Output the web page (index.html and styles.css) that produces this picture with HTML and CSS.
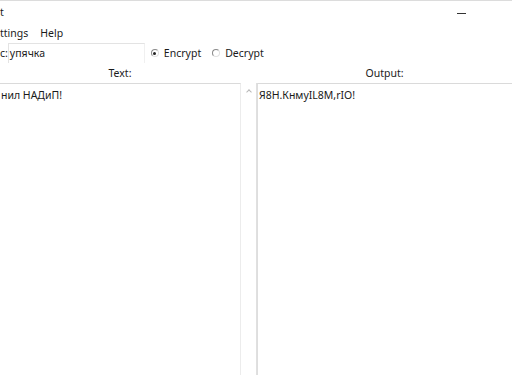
FILE: index.html
```html
<!DOCTYPE html>
<html lang="en">
<head>
  <meta charset="UTF-8" />
  <title>Crypt</title>
  <link rel="stylesheet" href="styles.css">
</head>
<body>
  <div class="window">
    <div class="titlebar">
      <span class="title">t</span>
      <span class="minimize"></span>
    </div>

    <div class="menu">
      <span class="menu-item">ttings</span>
      <span class="menu-item">Help</span>
    </div>

    <div class="key-row">
      <span class="key-label">c:</span>
      <div class="key-input">упячка</div>
      <label class="radio"><span class="dot checked"></span>Encrypt</label>
      <label class="radio"><span class="dot"></span>Decrypt</label>
    </div>

    <div class="panels">
      <div class="panel left">
        <div class="caption">Text:</div>
        <div class="box-wrap">
          <div class="box">нил НАДиП!</div>
          <div class="scrollbar"><span class="arrow"></span></div>
        </div>
      </div>
      <div class="panel right">
        <div class="caption">Output:</div>
        <div class="box">Я8Н.КнмуIL8M,rIO!</div>
      </div>
    </div>
  </div>
</body>
</html>
```

FILE: styles.css
```css
* {
  box-sizing: border-box;
}
body {
  margin: 0;
  background: #fff;
  font-family: 'Noto Sans', 'Open Sans', sans-serif;
  font-size: 10.5px;
  color: #1a1a1a;
}

.window {
  width: 512px;
  height: 375px;
  border-top: 1px solid #dcdcdc;
  display: flex;
  flex-direction: column;
  overflow: hidden;
}

.titlebar {
  height: 21px;
  display: flex;
  align-items: center;
  justify-content: space-between;
}
.minimize {
  width: 9px;
  height: 1px;
  background: #333;
  margin-right: 46px;
  margin-top: 3px;
}

.menu {
  height: 21px;
  display: flex;
  align-items: center;
  gap: 12px;
}

.key-row {
  height: 20px;
  display: flex;
  align-items: center;
}
.key-input {
  width: 137px;
  height: 20px;
  border-top: 1px solid #e3e3e3;
  border-right: 1px solid #f0f0f0;
  border-left: 1px solid #e3e3e3;
  padding: 1px 1px 0;
  line-height: 17px;
  margin-right: 6px;
}

.radio {
  display: flex;
  align-items: center;
  gap: 5px;
  margin-right: 11px;
}
.dot {
  width: 8px;
  height: 8px;
  border-radius: 50%;
  border: 1px solid #8a8a8a;
  border-right-color: #e0e0e0;
  border-bottom-color: #e0e0e0;
  position: relative;
}
.dot.checked::after {
  content: "";
  position: absolute;
  left: 1.5px;
  top: 1.5px;
  width: 3px;
  height: 3px;
  border-radius: 50%;
  background: #222;
}

.panels {
  flex: 1;
  display: flex;
}
.panel {
  display: flex;
  flex-direction: column;
}
.panel.left {
  width: 257px;
}
.panel.right {
  flex: 1;
}
.caption {
  height: 20px;
  line-height: 20px;
  text-align: center;
}
.panel.left .caption {
  width: 240px;
}
.box-wrap {
  flex: 1;
  display: flex;
}
.box {
  flex: 1;
  border-top: 1px solid #dadada;
  border-left: 1px solid #dedede;
  padding: 2px 1px;
  line-height: 18px;
}
.panel.left .box {
  border-left: none;
  border-right: 1px solid #ececec;
}
.scrollbar {
  width: 16px;
  border-right: 1px solid #e0e0e0;
  display: flex;
  justify-content: center;
  padding-top: 7px;
}
.arrow {
  width: 4px;
  height: 4px;
  border-left: 1px solid #b8b8b8;
  border-top: 1px solid #b8b8b8;
  transform: rotate(45deg);
}
```
